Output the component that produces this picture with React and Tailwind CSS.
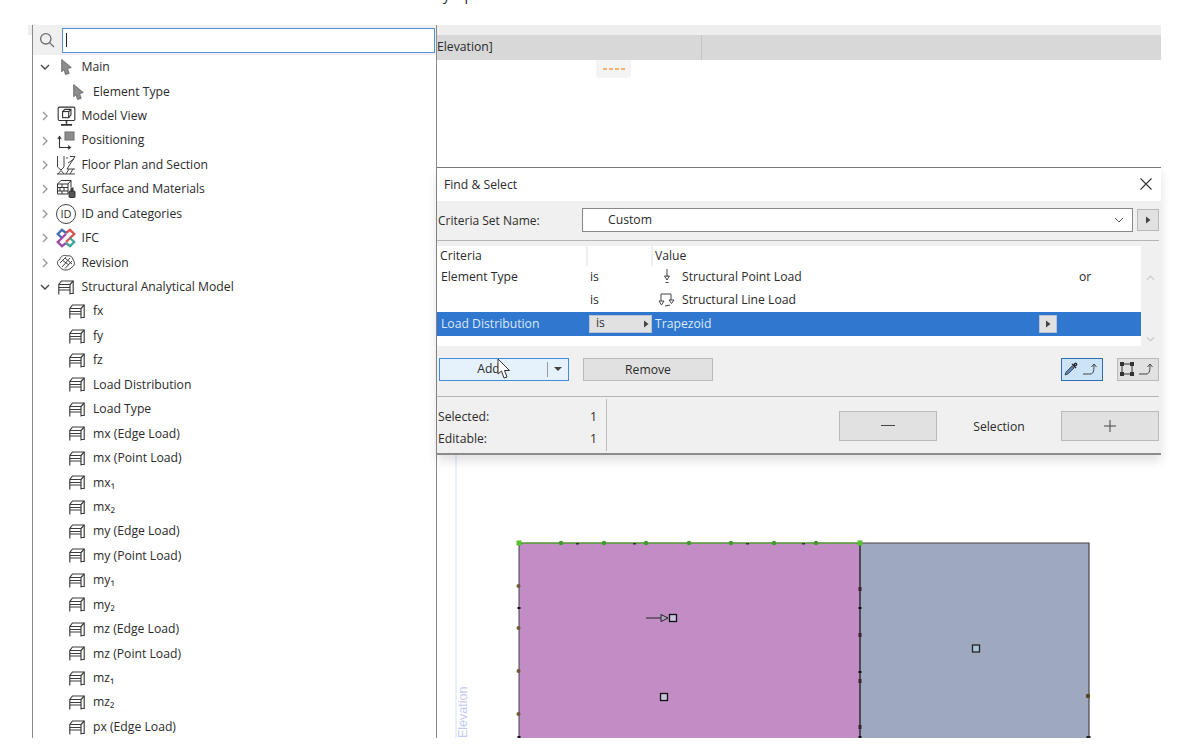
import React from "react";

const Arrow = ({ className = "" }) => (
  <svg viewBox="1 0.5 10 15" className={`w-[11px] h-[16px] ${className}`}>
    <path d="M1.5 1 L10.5 8.5 L7 9.5 L8.5 14 L5 15 L3.8 10.5 L1.5 12.5 Z" fill="#8c8c8c" stroke="#666" strokeWidth="0.8" />
  </svg>
);

const ModelViewIcon = () => (
  <svg viewBox="1.5 0.5 17 18" className="w-[19px] h-5" fill="none" stroke="#333" strokeWidth="1">
    <rect x="2.5" y="1.5" width="15" height="12" rx="1" />
    <rect x="6.5" y="5.5" width="5.5" height="5.5" />
    <path d="M6.5 5.5 L8.5 3.5 H14 V8.5 L12 11 M12 5.5 L14 3.5" />
    <path d="M10 13.5 V16.5 M5 17.5 H15" strokeWidth="1.4" />
  </svg>
);

const PositioningIcon = () => (
  <svg viewBox="0 0 20 20" className="w-5 h-5" fill="none" stroke="#333" strokeWidth="1.1">
    <rect x="9" y="1" width="9" height="8" fill="#8d8d8d" stroke="#777" />
    <path d="M3.5 17 V6 M1.8 8 L3.5 5.5 L5.2 8" />
    <path d="M3.5 16.5 H14 M12 14.8 L14.5 16.5 L12 18.2" />
  </svg>
);

const FloorPlanIcon = () => (
  <svg viewBox="0 0 20 20" className="w-5 h-5" fill="none" stroke="#444" strokeWidth="1">
    <path d="M1.5 1 V12 L5 15 L8 12 V1" />
    <path d="M10 3 H12 M14 1.5 H19 L11 14 H19 M12 8 L18 4 M10 19 L13 14 M14 19 L17 14 M1 19 H19" />
    <path d="M2 19 L5 15.5 L8 19" />
  </svg>
);

const SurfaceIcon = () => (
  <svg viewBox="0 0 20 20" className="w-5 h-5" fill="none" stroke="#333" strokeWidth="1">
    <path d="M1.5 5 L5 1.5 H15 V8 M1.5 5 H12 V15 H1.5 Z M1.5 8.5 H12 M1.5 12 H12 M6 5 V8.5 M4 8.5 V12 M8 8.5 V12 M6 12 V15 M12 5 L15 1.5" />
    <rect x="13" y="12" width="6" height="6.5" fill="#555" rx="1" />
    <rect x="15" y="9" width="2" height="3" fill="#555" />
  </svg>
);

const IdIcon = () => (
  <div className="w-5 h-5 rounded-full border border-[#444] flex items-center justify-center text-[11px] leading-none text-[#333]">ID</div>
);

const IfcIcon = () => (
  <svg viewBox="0 0 20 20" className="w-5 h-5" fill="none" strokeWidth="2.4">
    <path d="M10 5 L14 1.8 L18.2 6 L10 14" stroke="#d9534f" />
    <path d="M10 5 L6 1.8 L1.8 6 L6 10" stroke="#3f6fb5" />
    <path d="M10 15 L6 18.2 L1.8 14 L10 6" stroke="#a04aa5" />
    <path d="M10 15 L14 18.2 L18.2 14 L14 10" stroke="#3fa79b" />
  </svg>
);

const RevisionIcon = () => (
  <svg viewBox="0 0 20 20" className="w-5 h-5" fill="none" stroke="#444" strokeWidth="1">
    <path d="M3 13 C0.5 11 1 7 4 6.5 C4.5 3 8 1.5 11 3 C14 2 17 4 17 7 C19.5 9 18.5 13 16 14 C14 17 9 18 6 16 C5 15.5 4 14.5 3 13 Z" />
    <path d="M6 14 L14 5 M9 15.5 L16 8 M4 10 L10 4 M6 7 L13 12 M9 5 L16 11" />
  </svg>
);

const FrameIcon = () => (
  <svg viewBox="0 0 16 15" className="w-[16px] h-[15px]" fill="none" stroke="#3c3c3c" strokeWidth="1.15">
    <path d="M0.8 14.5 V4.5 L3.5 1 H15.2 V13.5 H12 M0.8 4.5 H12 V14.5" />
    <path d="M0.8 7.5 H12 M0.8 10 H12 M12 4.5 L15.2 1" />
  </svg>
);

const Chevron = ({ open }) => (
  <svg viewBox="0 0 10 10" className="w-[10px] h-[10px]" fill="none" stroke={open ? "#444" : "#9a9a9a"} strokeWidth="1.4">
    {open ? <path d="M1 3 L5 7 L9 3" /> : <path d="M3 1 L7 5 L3 9" />}
  </svg>
);

const Triangle = () => (
  <svg viewBox="0 0 6 8" className="w-[6px] h-[8px]"><path d="M1 0.5 L5.5 4 L1 7.5 Z" fill="#444" /></svg>
);

const topRows = [
  { label: "Main", icon: <Arrow />, open: true },
  { label: "Element Type", icon: <Arrow className="ml-[4px]" />, child: true },
  { label: "Model View", icon: <ModelViewIcon /> },
  { label: "Positioning", icon: <PositioningIcon /> },
  { label: "Floor Plan and Section", icon: <FloorPlanIcon /> },
  { label: "Surface and Materials", icon: <SurfaceIcon /> },
  { label: "ID and Categories", icon: <IdIcon /> },
  { label: "IFC", icon: <IfcIcon /> },
  { label: "Revision", icon: <RevisionIcon /> },
  { label: "Structural Analytical Model", icon: <FrameIcon />, open: true },
];

const loadRows = [
  "fx", "fy", "fz", "Load Distribution", "Load Type", "mx (Edge Load)", "mx (Point Load)", "mx₁", "mx₂",
  "my (Edge Load)", "my (Point Load)", "my₁", "my₂", "mz (Edge Load)", "mz (Point Load)", "mz₁", "mz₂", "px (Edge Load)",
];

const rows = [...topRows, ...loadRows.map((label) => ({ label, icon: <FrameIcon />, child: true }))];

const TreeRow = ({ row }) => (
  <div className="h-[24.44px] flex items-center shrink-0">
    {row.child ? (
      <>
        <div className="w-[36px] shrink-0" />
        <div className="w-[24px] shrink-0 flex justify-start">{row.icon}</div>
      </>
    ) : (
      <>
        <div className="w-[23px] shrink-0 flex justify-center"><Chevron open={row.open} /></div>
        <div className="w-[20px] mr-[5.5px] shrink-0 flex justify-center">{row.icon}</div>
      </>
    )}
    <span className="whitespace-nowrap">{row.label}</span>
  </div>
);

const LeftPanel = () => (
  <div className="w-[405px] h-[713px] shrink-0 border-l-[1.5px] border-r-[1.5px] border-[#8a8a8a] flex flex-col overflow-hidden">
    <div className="h-[30px] bg-[#f0f0f0] flex items-center shrink-0">
      <div className="w-[28.5px] flex justify-center pr-[1px]">
        <svg viewBox="0 0 16 16" className="w-4 h-4" fill="none" stroke="#6e6e6e" strokeWidth="1.3">
          <circle cx="6.8" cy="6.8" r="5.2" />
          <path d="M10.6 10.6 L15 15" />
        </svg>
      </div>
      <div className="flex-1 h-[25px] mr-[1px] bg-white border border-[#4f94d8] flex items-center pl-[3px]">
        <div className="w-[1px] h-[14px] bg-[#222]" />
      </div>
    </div>
    <div className="flex flex-col">
      {rows.map((row) => <TreeRow key={row.label} row={row} />)}
    </div>
  </div>
);

const GrayButton = ({ className = "", children }) => (
  <div className={`bg-[#e1e1e1] border border-[#b9b9b9] flex items-center justify-center ${className}`}>{children}</div>
);

const CurveArrow = () => (
  <svg viewBox="0 0 18 14" className="w-[18px] h-[14px]" fill="none" stroke="#444" strokeWidth="1">
    <path d="M1 12 H8 C11 12 12 10 12 3 M9.5 5 L12 2 L14.5 5" />
  </svg>
);

const CriteriaTable = () => (
  <div className="h-[100px] flex shrink-0">
    <div className="w-[704px] bg-white flex flex-col">
      <div className="h-[20px] flex items-center">
        <span className="w-[151px] pl-[3px] pt-[1px] border-r-[2px] border-[#f0f0f0] h-full flex items-center">Criteria</span>
        <span className="w-[65px] border-r-[2px] border-[#f0f0f0] h-full" />
        <span className="pl-[2px] pt-[1px]">Value</span>
      </div>
      <div className="h-[23px] flex items-center">
        <span className="w-[150px] pl-[4px] pt-[1px]">Element Type</span>
        <span className="w-[65px] pl-[3px] pt-[1px]">is</span>
        <span className="w-[29px] flex justify-center">
          <svg viewBox="0 0 10 16" className="w-[10px] h-[16px]" fill="none" stroke="#444">
            <path d="M5 0 V8 M2.5 7 H7.5 L5 11 Z M3.5 13.5 H6.5" />
          </svg>
        </span>
        <span className="w-[397px] pl-[1px] pt-[1px]">Structural Point Load</span>
        <span className="pl-[1px] pt-[1px]">or</span>
      </div>
      <div className="h-[23px] flex items-center">
        <span className="w-[150px]" />
        <span className="w-[65px] pl-[3px] pt-[1px]">is</span>
        <span className="w-[29px] flex justify-center">
          <svg viewBox="0 0 18 16" className="w-[18px] h-[16px]" fill="none" stroke="#444">
            <path d="M3 9 V2 H13 V8 M1 9 H6 L3.5 13 Z M11 8 H16 L13.5 11.5 Z M7 14 L12 13" />
          </svg>
        </span>
        <span className="pl-[1px] pt-[1px]">Structural Line Load</span>
      </div>
      <div className="h-[24px] bg-[#3077d0] flex items-center text-[#dbe8f8]">
        <span className="w-[152px] pl-[4px] pt-[2px]">Load Distribution</span>
        <span className="w-[63px] h-[18px] bg-[#e1e1e1] border border-[#b9c4d2] text-[#333] flex items-center justify-between pl-[6px] pr-[2px] mr-[1px]">
          is
          <Triangle />
        </span>
        <span className="w-[386px] pl-[2px] pt-[2px]">Trapezoid</span>
        <span className="w-[18px] h-[18px] bg-[#e1e1e1] border border-[#b9c4d2] flex items-center justify-center"><Triangle /></span>
      </div>
    </div>
    <div className="w-[19px] flex flex-col justify-between items-center pt-[29px] pb-[4px]">
      <svg viewBox="0 0 10 6" className="w-[9px] h-[6px]" fill="none" stroke="#cfcfcf" strokeWidth="1.5"><path d="M1 5 L5 1 L9 5" /></svg>
      <svg viewBox="0 0 10 6" className="w-[9px] h-[6px]" fill="none" stroke="#cfcfcf" strokeWidth="1.5"><path d="M1 1 L5 5 L9 1" /></svg>
    </div>
  </div>
);

const Dialog = () => (
  <div className="relative z-10 h-[288px] border-t-[1.5px] border-b-[2px] border-t-[#777] border-b-[#8c8c8c] bg-[#f0f0f0] shadow-[0_6px_10px_rgba(0,0,0,0.12)] flex flex-col">
    <div className="h-[32.5px] bg-white flex items-center justify-between pl-[7px] pr-[9px] shrink-0">
      <span className="pt-[1px]">Find & Select</span>
      <svg viewBox="0 0 12 12" className="w-[12px] h-[12px]" fill="none" stroke="#333" strokeWidth="1.1"><path d="M0.5 0.5 L11.5 11.5 M11.5 0.5 L0.5 11.5" /></svg>
    </div>

    <div className="h-[39px] flex items-center shrink-0 pl-[1px] pb-[1px]">
      <span className="w-[144px] pt-[2px] text-[12px]">Criteria Set Name:</span>
      <div className="w-[551px] h-[24px] bg-white border border-[#8a8a8a] flex items-center justify-between pl-[25px] pr-[8px]">
        <span className="pt-[1px]">Custom</span>
        <svg viewBox="0 0 10 6" className="w-[10px] h-[6px]" fill="none" stroke="#555"><path d="M1 1 L5 5 L9 1" /></svg>
      </div>
      <GrayButton className="w-[22px] h-[22px] ml-[4px]"><Triangle /></GrayButton>
    </div>
    <div className="h-[1.5px] w-[722px] bg-[#b5b5b5] shrink-0" />
    <div className="h-[4.5px] shrink-0" />
    <CriteriaTable />

    <div className="h-[50px] flex items-center shrink-0 pl-[2px] pb-[3px]">
      <div className="w-[130px] h-[23px] bg-[#e5f1fb] border border-[#3f8edb] flex items-center">
        <span className="w-[107px] text-center pr-[10px] pt-[1px]">Add</span>
        <span className="w-[1px] h-[15px] bg-[#999]" />
        <span className="flex-1 flex justify-center">
          <svg viewBox="0 0 8 4" className="w-[8px] h-[4px]"><path d="M0 0 H8 L4 4 Z" fill="#444" /></svg>
        </span>
      </div>
      <GrayButton className="w-[130px] h-[23px] ml-[14px] pt-[2px]">Remove</GrayButton>
      <div className="w-[348px]" />
      <div className="w-[42px] h-[23px] bg-[#cce4f7] border border-[#2f6fb0] flex items-center justify-center gap-[4px]">
        <svg viewBox="0 0 14 14" className="w-[14px] h-[14px]" fill="none">
          <path d="M1 13 L2 10 L8 4 L10 6 L4 12 Z" fill="#5b87b8" stroke="#334" strokeWidth="0.8" />
          <path d="M8 2 L12 6 M9.5 3.5 L11 1.5 C12 0.8 13.2 2 12.5 3 L10.5 4.5" stroke="#222" strokeWidth="1.3" />
        </svg>
        <CurveArrow />
      </div>
      <GrayButton className="w-[42px] h-[23px] ml-[14px] gap-[4px]">
        <svg viewBox="0 0 14 14" className="w-[14px] h-[14px]" fill="none" stroke="#333" strokeWidth="1">
          <rect x="2" y="2" width="10" height="10" />
          <rect x="0.5" y="0.5" width="3" height="3" fill="#333" />
          <rect x="10.5" y="0.5" width="3" height="3" fill="#333" />
          <rect x="0.5" y="10.5" width="3" height="3" fill="#333" />
          <rect x="10.5" y="10.5" width="3" height="3" fill="#333" />
        </svg>
        <CurveArrow />
      </GrayButton>
    </div>
    <div className="h-[1.5px] w-[722px] bg-[#b5b5b5] shrink-0" />

    <div className="flex-1 flex items-stretch pl-[1px]">
      <div className="w-[169px] flex flex-col pt-[7px] pr-[9px] border-r-[1.5px] border-[#bdbdbd] my-[2px]">
        <div className="h-[22px] flex items-center justify-between"><span>Selected:</span><span>1</span></div>
        <div className="h-[22px] flex items-center justify-between"><span>Editable:</span><span>1</span></div>
      </div>
      <div className="flex items-center pt-[1px]">
        <GrayButton className="w-[98px] h-[30px] ml-[232px]">
          <span className="w-[14px] h-[1px] bg-[#444]" />
        </GrayButton>
        <span className="w-[124px] text-center pt-[3px]">Selection</span>
        <GrayButton className="w-[98px] h-[30px]">
          <svg viewBox="0 0 12 12" className="w-[12px] h-[12px]" fill="none" stroke="#444"><path d="M6 0 V12 M0 6 H12" /></svg>
        </GrayButton>
      </div>
    </div>
  </div>
);

// drawing below the dialog, coordinates are relative to the canvas corner
const Drawing = () => {
  const topNodes = [123, 166, 208, 251, 293, 336, 378];
  const topTicks = [138, 195, 308, 364];
  const leftNodes = [131, 173, 216, 259];
  const rightBig = [134, 180, 226, 272];
  const rightSmall = [153, 217, 282];
  return (
    <svg viewBox="-1 0 724 283" className="w-[724px] h-[283px]">
      <rect x="17" y="0" width="2" height="283" fill="#e8eefc" />
      <text transform="translate(29 283) rotate(-90)" fontSize="12.5" fill="#c3cbf3" fontFamily="'Liberation Sans', sans-serif">Elevation</text>
      <rect x="81" y="88" width="341" height="195" fill="#c18dc4" />
      <rect x="422" y="88" width="229" height="195" fill="#9ea9bf" />
      <path d="M81 283 V88" stroke="#444" strokeWidth="1" />
      <path d="M422 88 H651 V283" stroke="#444" strokeWidth="1.2" fill="none" />
      <path d="M422 88 V283" stroke="#111" strokeWidth="1.2" />
      <path d="M81 88 H422" stroke="#4e9a2e" strokeWidth="1.6" />
      <rect x="78.5" y="85.5" width="5" height="5" fill="#55c22e" />
      <rect x="419.5" y="85.5" width="5" height="5" fill="#55c22e" />
      {topNodes.map((x) => <circle key={x} cx={x} cy="88" r="2.2" fill="#3f9a2c" />)}
      {topTicks.map((x) => <rect key={x} x={x} y="88" width="3" height="1.5" fill="#333" />)}
      {leftNodes.map((y) => <circle key={y} cx="80.5" cy={y} r="2" fill="#6d5a3a" />)}
      <rect x="79.5" y="152" width="3" height="2" fill="#111" />
      {rightBig.map((y) => <rect key={y} x="420.5" y={y - 2} width="3" height="4" fill="#3a2233" />)}
      {rightSmall.map((y) => <rect key={y} x="420.5" y={y - 1} width="3" height="2" fill="#111" />)}
      <path d="M208 163 H223" stroke="#222" />
      <path d="M223 159.5 L230 163 L223 166.5 Z" fill="#b5a5cc" stroke="#222" />
      <rect x="231.5" y="159.5" width="7" height="7" fill="#c9c4e0" stroke="#111" strokeWidth="1.3" />
      <rect x="222.5" y="238.5" width="7" height="7" fill="#c9c4e0" stroke="#111" strokeWidth="1.3" />
      <rect x="534.5" y="190" width="7" height="7" fill="#a9c3dc" stroke="#222" strokeWidth="1.3" />
      <circle cx="650" cy="241" r="2.2" fill="#55471f" />
      <rect x="648.5" y="281" width="4" height="2" fill="#222" />
      <rect x="79.5" y="281" width="3" height="2" fill="#111" />
    </svg>
  );
};

export default function App() {
  return (
    <div className="relative w-[1178px] h-[756px] bg-white overflow-hidden text-[12.2px] leading-none text-[#2b2b2b] flex font-['Open_Sans','Liberation_Sans',sans-serif]">
      {/* scrap of the slide caption, clipped by the top of the picture */}
      <div className="absolute left-[443px] top-[-12px] text-[14px] text-[#222]">y &nbsp;&nbsp;&nbsp;p</div>

      <div className="w-[28px] shrink-0" />
      <div className="w-[4px] shrink-0 pt-[25px]">
        <div className="h-[10px] bg-[#eeeeee]" />
      </div>
      <div className="pt-[25px] shrink-0">
        <LeftPanel />
      </div>

      <div className="w-[724px] shrink-0 pt-[25px] flex flex-col">
        <div className="h-[10px] bg-[#eeeeee] shrink-0" />
        <div className="h-[25px] bg-[#d8d8d8] shrink-0 flex items-center">
          <span className="w-[265px] h-full flex items-center border-r border-[#c4c4c4]">Elevation]</span>
        </div>
        <div className="h-[107px] shrink-0 pl-[159px]">
          <div className="w-[35px] h-[18px] bg-[#f4f4f4] rounded-b-[3px] flex items-center justify-center gap-[2px]">
            <span className="w-[4px] h-[1.5px] bg-[#f5b27a]" />
            <span className="w-[4px] h-[1.5px] bg-[#f5b27a]" />
            <span className="w-[4px] h-[1.5px] bg-[#f5b27a]" />
            <span className="w-[4px] h-[1.5px] bg-[#f5b27a]" />
          </div>
        </div>
        <Dialog />
        <Drawing />
      </div>

      {/* mouse pointer over the Add button */}
      <svg viewBox="0 0 14 22" className="absolute z-20 left-[497px] top-[358px] w-[14px] h-[22px]">
        <path d="M1 1 L1 16 L4.5 13 L7 20 L10 19 L7.5 12.5 L12.5 12.5 Z" fill="#fff" stroke="#333" strokeWidth="1" />
      </svg>
    </div>
  );
}
